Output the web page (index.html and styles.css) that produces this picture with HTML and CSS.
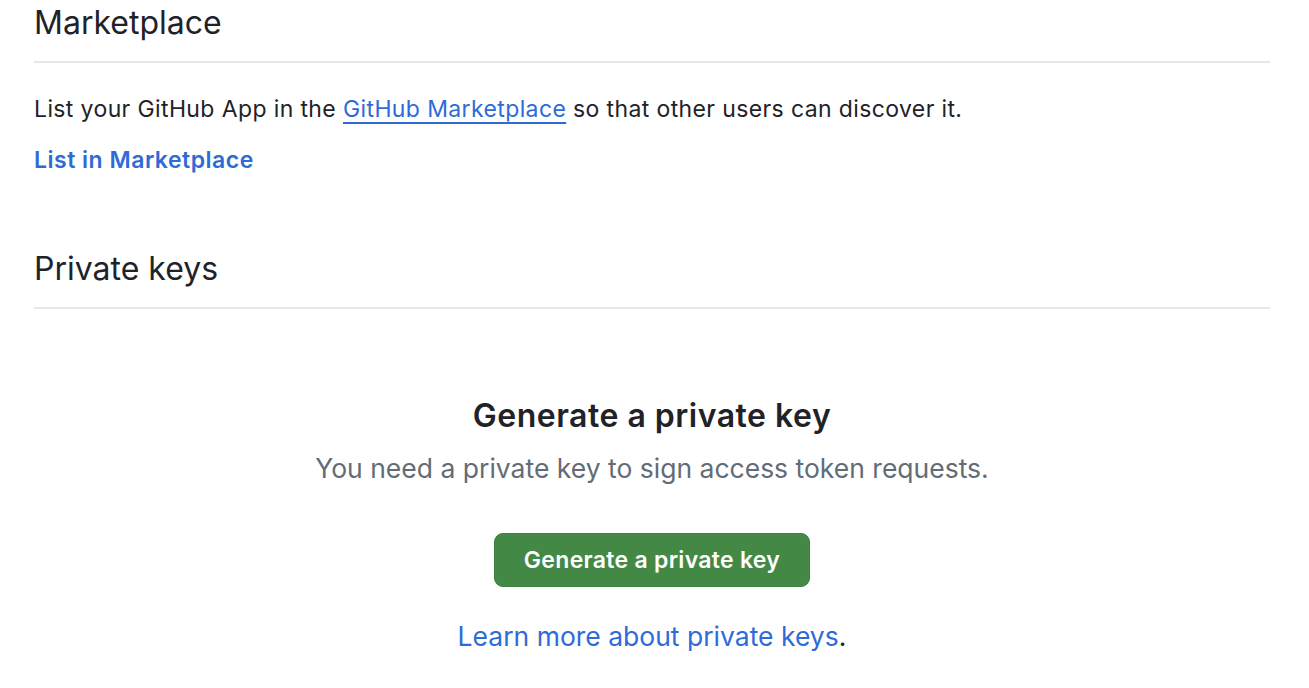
FILE: index.html
```html
<!DOCTYPE html>
<html>
<head>
<meta charset="utf-8">
<link rel="stylesheet" href="styles.css">
</head>
<body>
<main class="page">
  <section class="section">
    <div class="subhead">
      <h2 class="subhead-heading">Marketplace</h2>
    </div>
    <p class="text">List your GitHub App in the <a class="inline-link" href="#">GitHub Marketplace</a> so that other users can discover it.</p>
    <a class="bold-link" href="#">List in Marketplace</a>
  </section>
  <section class="section section-keys">
    <div class="subhead">
      <h2 class="subhead-heading">Private keys</h2>
    </div>
    <div class="blankslate">
      <h3 class="blankslate-heading">Generate a private key</h3>
      <p class="blankslate-text">You need a private key to sign access token requests.</p>
      <button class="btn-primary" type="button">Generate a private key</button>
      <p class="blankslate-link"><a class="plain-link" href="#">Learn more about private keys</a>.</p>
    </div>
  </section>
</main>
</body>
</html>
```

FILE: styles.css
```css
* { box-sizing: border-box; }
html, body { margin: 0; padding: 0; background: #ffffff; }
body {
  font-family: Inter, "Noto Sans", "Liberation Sans", sans-serif;
  color: #1f2328;
  font-size: 23px;
  line-height: 33px;
}
.page {
  padding: 0 39px 0 34px;
}
.section {
  display: flex;
  flex-direction: column;
  align-items: flex-start;
}
.subhead {
  align-self: stretch;
  border-bottom: 2px solid #e3e6ea;
  padding-bottom: 16px;
}
.subhead-heading {
  margin: 0;
  font-size: 32px;
  font-weight: 400;
  line-height: 45px;
}
.text {
  margin: 30px 0 0 0;
  letter-spacing: 0.38px;
}
.inline-link {
  color: #2e6bd7;
  text-decoration: underline;
  text-decoration-thickness: 2px;
  text-underline-offset: 5px;
}
.bold-link {
  margin-top: 18px;
  color: #2e6bd7;
  font-weight: 600;
  letter-spacing: 0.5px;
  text-decoration: none;
}
.section-keys {
  margin-top: 69px;
}
.blankslate {
  align-self: stretch;
  display: flex;
  flex-direction: column;
  align-items: center;
  padding-top: 84px;
}
.blankslate-heading {
  margin: 0;
  font-size: 32px;
  font-weight: 600;
  line-height: 45px;
  letter-spacing: 0.5px;
}
.blankslate-text {
  margin: 12px 0 0 0;
  color: #636c76;
  font-size: 26.5px;
  line-height: 36px;
}
.btn-primary {
  margin-top: 47px;
  width: 316px;
  height: 54px;
  border: 1px solid #3c7f40;
  border-radius: 9px;
  background: #438945;
  color: #ffffff;
  font-family: inherit;
  font-size: 23px;
  font-weight: 600;
  letter-spacing: 0.3px;
}
.blankslate-link {
  margin: 31px 0 0 0;
  font-size: 26.5px;
  line-height: 36px;
}
.plain-link {
  color: #2e6bd7;
  text-decoration: none;
}
```
